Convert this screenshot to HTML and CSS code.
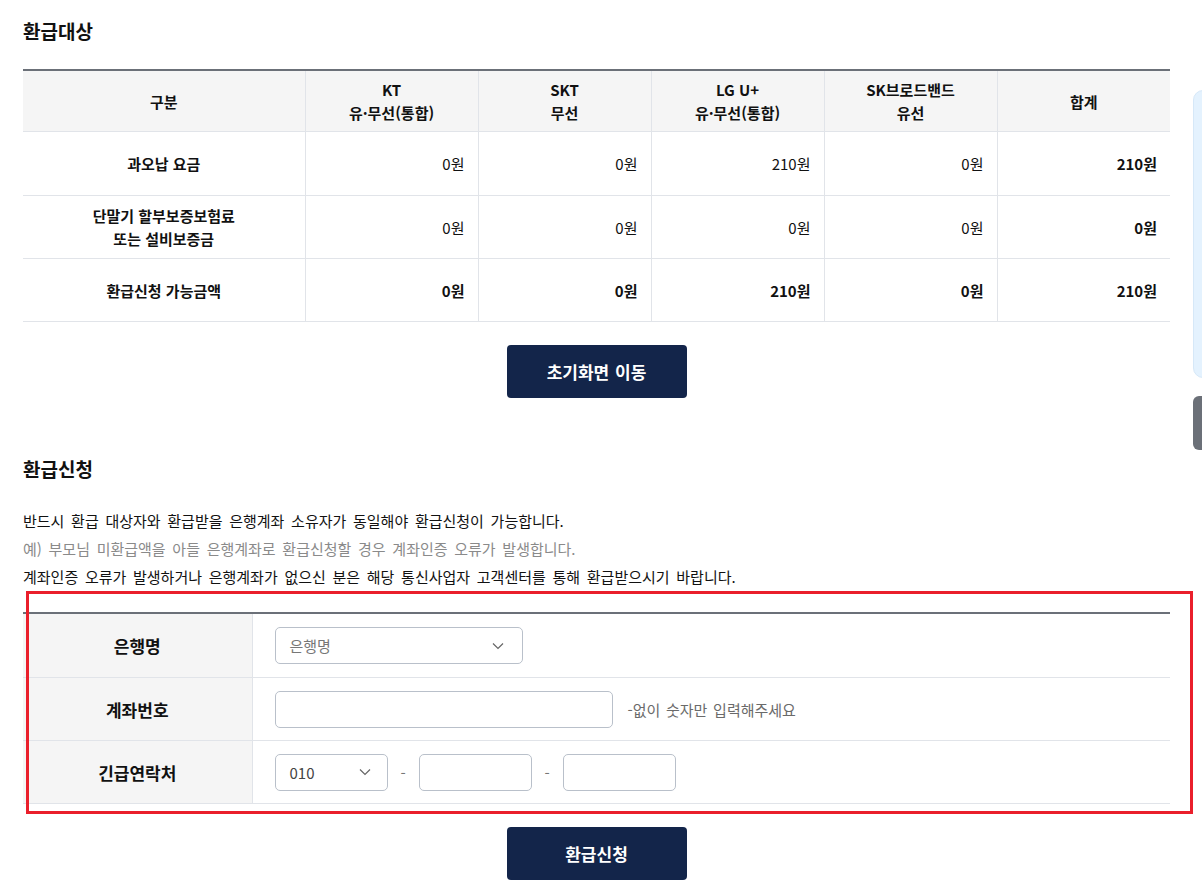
FILE: index.html
```html
<!DOCTYPE html>
<html lang="ko">
<head>
<meta charset="utf-8">
<title>환급대상</title>
<link rel="stylesheet" href="styles.css">
</head>
<body>
<div class="page">
  <h2 class="sec-title">환급대상</h2>
  <table class="data">
    <colgroup>
      <col class="c-first"><col><col><col><col><col>
    </colgroup>
    <thead>
      <tr>
        <th>구분</th>
        <th>KT<br>유·무선(통합)</th>
        <th>SKT<br>무선</th>
        <th>LG U+<br>유·무선(통합)</th>
        <th>SK브로드밴드<br>유선</th>
        <th>합계</th>
      </tr>
    </thead>
    <tbody>
      <tr>
        <th>과오납 요금</th>
        <td>0원</td><td>0원</td><td>210원</td><td>0원</td><td class="b">210원</td>
      </tr>
      <tr>
        <th>단말기 할부보증보험료<br>또는 설비보증금</th>
        <td>0원</td><td>0원</td><td>0원</td><td>0원</td><td class="b">0원</td>
      </tr>
      <tr class="total">
        <th>환급신청 가능금액</th>
        <td>0원</td><td>0원</td><td>210원</td><td>0원</td><td>210원</td>
      </tr>
    </tbody>
  </table>
  <div class="btn-row first-btn"><button class="btn" type="button">초기화면 이동</button></div>

  <h2 class="sec-title second">환급신청</h2>
  <div class="notice">
    <p>반드시 환급 대상자와 환급받을 은행계좌 소유자가 동일해야 환급신청이 가능합니다.</p>
    <p class="gray">예) 부모님 미환급액을 아들 은행계좌로 환급신청할 경우 계좌인증 오류가 발생합니다.</p>
    <p>계좌인증 오류가 발생하거나 은행계좌가 없으신 분은 해당 통신사업자 고객센터를 통해 환급받으시기 바랍니다.</p>
  </div>

  <div class="form-wrap">
    <table class="form">
      <colgroup><col class="f-label"><col></colgroup>
      <tbody>
        <tr>
          <th>은행명</th>
          <td>
            <div class="select bank">
              <span class="ph">은행명</span>
              <svg class="chev" width="12" height="8" viewBox="0 0 12 8"><path d="M1 1.5 L6 6.5 L11 1.5" fill="none" stroke="#666" stroke-width="1.2"/></svg>
            </div>
          </td>
        </tr>
        <tr>
          <th>계좌번호</th>
          <td>
            <div class="inline">
              <div class="input acct"></div>
              <span class="hint">-없이 숫자만 입력해주세요</span>
            </div>
          </td>
        </tr>
        <tr>
          <th>긴급연락처</th>
          <td>
            <div class="inline phone">
              <div class="select tel">
                <span class="val">010</span>
                <svg class="chev" width="12" height="8" viewBox="0 0 12 8"><path d="M1 1.5 L6 6.5 L11 1.5" fill="none" stroke="#666" stroke-width="1.2"/></svg>
              </div>
              <span class="dash">-</span>
              <div class="input tel-in"></div>
              <span class="dash">-</span>
              <div class="input tel-in"></div>
            </div>
          </td>
        </tr>
      </tbody>
    </table>
    <div class="highlight"></div>
  </div>
  <div class="btn-row last-btn"><button class="btn" type="button">환급신청</button></div>
</div>
<div class="side-panel"></div>
<div class="side-tab"></div>
</body>
</html>
```

FILE: styles.css
```css
html, body {
  margin: 0;
  padding: 0;
  background: #fff;
}
body {
  font-family: "Noto Sans CJK KR", "Noto Sans", sans-serif;
  color: #111;
  font-size: 15px;
  overflow: hidden;
}
.page {
  width: 1147px;
  padding: 18px 0 0 23px;
}
.sec-title {
  margin: 0 0 25px;
  font-size: 19px;
  line-height: 26px;
  font-weight: 700;
}
.sec-title.second {
  margin-top: 58px;
}
table {
  border-collapse: collapse;
  width: 100%;
  table-layout: fixed;
}
.data {
  border-top: 2px solid #6b7078;
}
.c-first { width: 282px; }
.data th, .data td {
  border-bottom: 1px solid #e1e4e9;
  border-left: 1px solid #e1e4e9;
  font-size: 15px;
  line-height: 23px;
  color: #111;
}
.data tr > :first-child { border-left: none; }
.data thead th {
  background: #f5f5f5;
  height: 60px;
  padding: 0;
  font-weight: 700;
  text-align: center;
}
.data tbody th {
  height: 62px;
  padding: 0;
  font-weight: 700;
  text-align: center;
}
.data tbody tr:first-child th { height: 63px; }
.data tbody td {
  text-align: right;
  padding: 0 13px 0 0;
  font-weight: 400;
}
.data td.b, .data .total td { font-weight: 700; }

.btn-row {
  display: flex;
  justify-content: center;
}
.first-btn { margin-top: 23px; }
.last-btn { margin-top: 23px; }
.btn {
  width: 180px;
  height: 53px;
  border: none;
  border-radius: 4px;
  background: #13254a;
  color: #fff;
  font-family: inherit;
  font-size: 17px;
  font-weight: 700;
  word-spacing: 1px;
  cursor: pointer;
}

.notice p {
  margin: 0;
  line-height: 28px;
  font-size: 15px;
  word-spacing: 2.5px;
}
.notice .gray { color: #8a8a8a; }

.form-wrap {
  position: relative;
  margin-top: 21px;
}
.form {
  border-top: 2px solid #6b7078;
}
.f-label { width: 229px; }
.form th, .form td {
  border-bottom: 1px solid #e1e4e9;
  height: 62px;
  padding: 0;
}
.form tr:first-child th, .form tr:first-child td { height: 63px; }
.form th {
  background: #f5f5f5;
  border-right: 1px solid #e1e4e9;
  font-size: 17px;
  font-weight: 700;
  text-align: center;
}
.form td { padding-left: 22px; }
.select, .input {
  box-sizing: border-box;
  height: 37px;
  border: 1px solid #b9c0ca;
  border-radius: 5px;
  background: #fff;
}
.select {
  display: flex;
  align-items: center;
  justify-content: space-between;
  padding: 0 18px 0 14px;
  font-size: 15px;
}
.bank { width: 248px; }
.ph { color: #777; }
.val { color: #444; }
.tel { width: 113px; padding-right: 16px; }
.chev { display: block; }
.inline {
  display: flex;
  align-items: center;
}
.acct { width: 338px; }
.hint {
  margin-left: 15px;
  font-size: 15px;
  word-spacing: 1.5px;
  color: #6a6a6a;
}
.phone .dash {
  width: 31px;
  text-align: center;
  color: #777;
  font-size: 15px;
}
.tel-in { width: 113px; }

.highlight {
  position: absolute;
  left: 3px;
  top: -21px;
  width: 1167px;
  height: 223px;
  box-sizing: border-box;
  border: 3px solid #ea1f2b;
  pointer-events: none;
}

.side-panel {
  position: absolute;
  left: 1193px;
  top: 90px;
  width: 40px;
  height: 288px;
  box-sizing: border-box;
  background: #e4f2fe;
  border: 1px solid #d6e8f8;
  border-radius: 10px;
}
.side-tab {
  position: absolute;
  left: 1193px;
  top: 396px;
  width: 30px;
  height: 54px;
  background: #6b7078;
  border-radius: 6px;
}
```
